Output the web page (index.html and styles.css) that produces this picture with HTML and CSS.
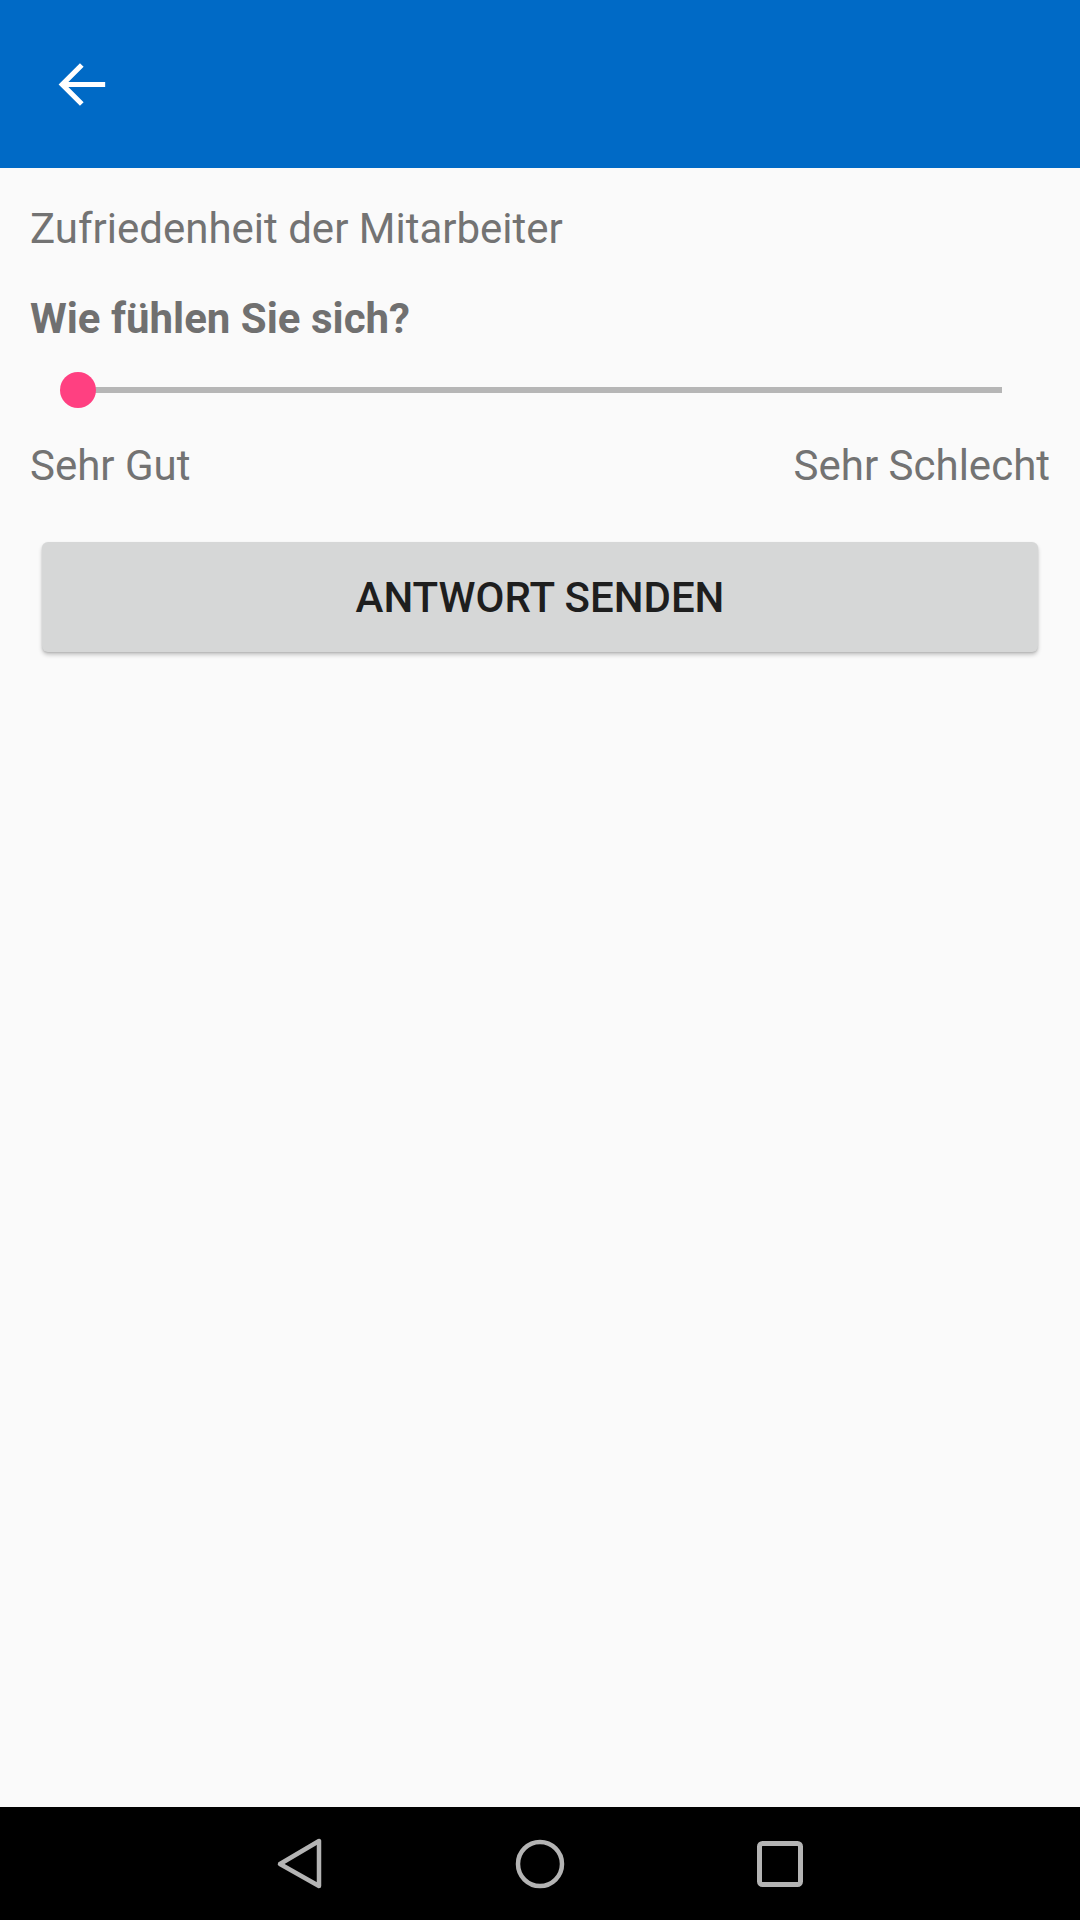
FILE: index.html
```html
<!DOCTYPE html>
<html lang="de">
<head>
<meta charset="utf-8">
<title>Zufriedenheit der Mitarbeiter</title>
<link rel="stylesheet" href="styles.css">
</head>
<body>
<div class="screen">
  <header class="appbar">
    <svg class="back" viewBox="0 0 24 24" width="71" height="71" aria-label="Zurück">
      <path d="M20 12H5.6 M12.1 5.4 5.5 12 12.1 18.6" fill="none" stroke="#ffffff" stroke-width="1.75"/>
    </svg>
  </header>
  <main class="content">
    <div class="title">Zufriedenheit der Mitarbeiter</div>
    <div class="question">Wie fühlen Sie sich?</div>
    <div class="slider">
      <div class="track">
        <div class="thumb"></div>
      </div>
    </div>
    <div class="labels">
      <span>Sehr Gut</span>
      <span>Sehr Schlecht</span>
    </div>
    <button class="send">ANTWORT SENDEN</button>
  </main>
  <nav class="navbar">
    <div class="navitem">
      <svg width="60" height="60" viewBox="0 0 60 60"><path d="M10 30 L49 7 L49 52 Z" fill="none" stroke="#b4b4b4" stroke-width="4.5" stroke-linejoin="round"/></svg>
    </div>
    <div class="navitem">
      <svg width="60" height="60" viewBox="0 0 60 60"><circle cx="30" cy="30" r="22" fill="none" stroke="#b4b4b4" stroke-width="4.5"/></svg>
    </div>
    <div class="navitem">
      <svg width="60" height="60" viewBox="0 0 60 60"><rect x="9.5" y="9.5" width="41" height="41" rx="3" fill="none" stroke="#b4b4b4" stroke-width="5"/></svg>
    </div>
  </nav>
</div>
</body>
</html>
```

FILE: styles.css
```css
html, body {
  margin: 0;
  padding: 0;
  background: #fafafa;
}

body {
  font-family: Roboto, "Noto Sans", "Liberation Sans", sans-serif;
}

.screen {
  width: 1080px;
  height: 1920px;
  display: flex;
  flex-direction: column;
  background: #fafafa;
  overflow: hidden;
}

.appbar {
  height: 168px;
  flex: none;
  background: #006ac6;
  display: flex;
  align-items: center;
  padding-left: 46px;
  box-sizing: border-box;
}

.back {
  display: block;
}

.content {
  flex: 1;
  display: flex;
  flex-direction: column;
  padding: 33px 30px 0 30px;
}

.title {
  font-size: 42px;
  line-height: 56px;
  color: #737373;
  font-weight: 400;
}

.question {
  margin-top: 34px;
  font-size: 42px;
  line-height: 56px;
  color: #707070;
  font-weight: 700;
}

.slider {
  margin-top: 19px;
  height: 48px;
  display: flex;
  align-items: center;
  padding: 0 48px;
}

.track {
  flex: 1;
  height: 6px;
  background: #b6b6b6;
  position: relative;
}

.thumb {
  position: absolute;
  left: -18px;
  top: -15px;
  width: 36px;
  height: 36px;
  border-radius: 50%;
  background: #ff4081;
}

.labels {
  margin-top: 24px;
  display: flex;
  justify-content: space-between;
  font-size: 42px;
  line-height: 56px;
  color: #737373;
}

.send {
  margin: 48px 12px 0 12px;
  height: 110px;
  border: none;
  border-radius: 6px;
  background: #d6d7d7;
  color: #1e1e1e;
  font-family: Roboto, "Noto Sans", "Liberation Sans", sans-serif;
  font-size: 42px;
  font-weight: 500;
  box-shadow: 0 3px 4px rgba(0, 0, 0, 0.2), 0 1px 2px rgba(0, 0, 0, 0.12);
  padding: 0;
}

.navbar {
  height: 113px;
  flex: none;
  background: #000000;
  display: grid;
  grid-template-columns: repeat(3, 240px);
  justify-content: center;
  align-items: center;
}

.navitem {
  display: flex;
  justify-content: center;
  align-items: center;
}

.navitem svg {
  display: block;
}
```
